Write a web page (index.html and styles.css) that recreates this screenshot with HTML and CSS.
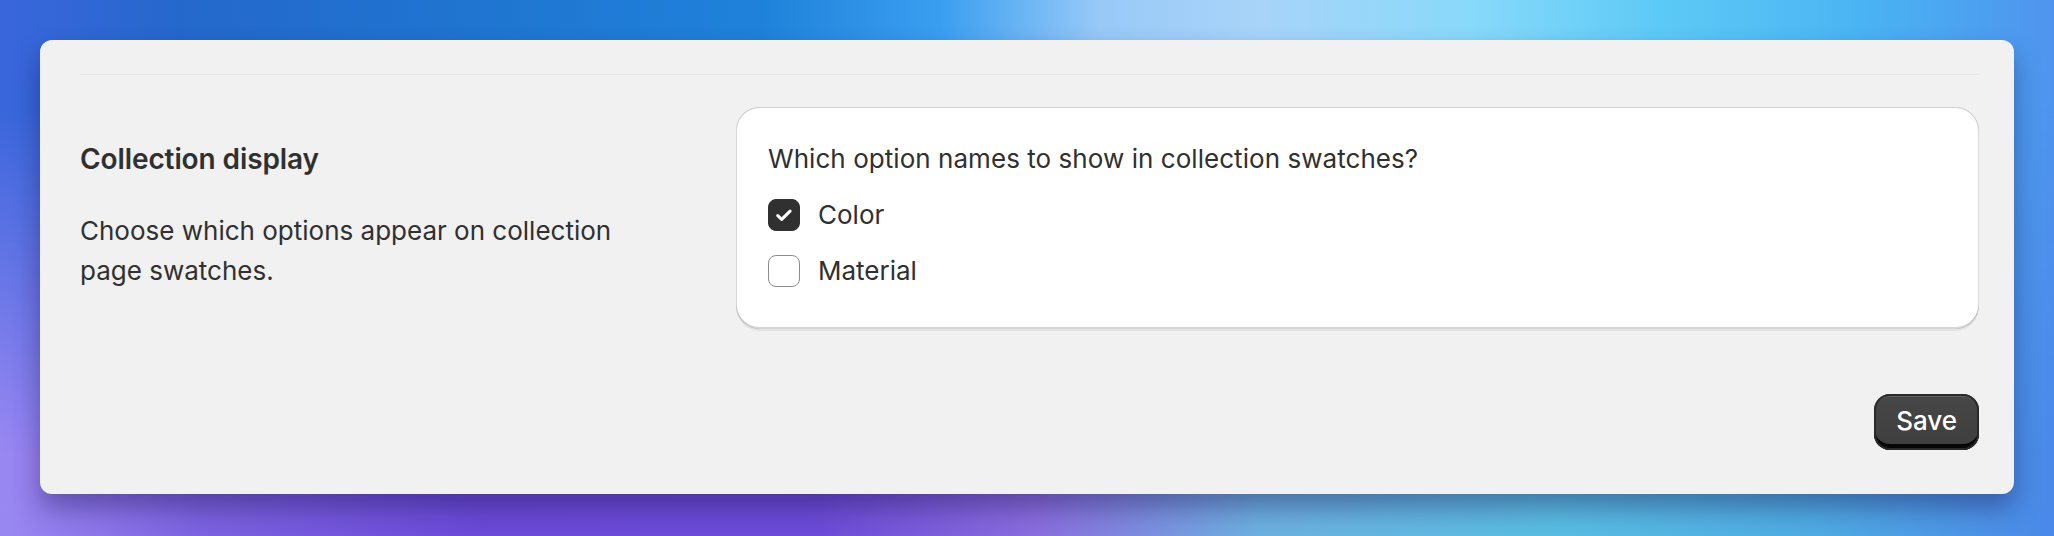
FILE: index.html
```html
<!DOCTYPE html>
<html lang="en">
<head>
<meta charset="utf-8">
<title>Collection display settings</title>
<link rel="stylesheet" href="styles.css">
</head>
<body>
<main class="backdrop">
  <section class="panel">
    <hr class="divider">
    <div class="section">
      <div class="intro">
        <h2 class="intro-title">Collection display</h2>
        <p class="intro-text">Choose which options appear on collection page swatches.</p>
      </div>
      <div class="card">
        <p class="question">Which option names to show in collection swatches?</p>
        <label class="choice">
          <span class="box box-checked">
            <svg viewBox="0 0 32 32" width="32" height="32" aria-hidden="true"><path d="M9.3 16.6l4.2 4 9-8.8" fill="none" stroke="#fff" stroke-width="3.3" stroke-linecap="round" stroke-linejoin="round"/></svg>
          </span>
          <span class="choice-label">Color</span>
        </label>
        <label class="choice">
          <span class="box"></span>
          <span class="choice-label">Material</span>
        </label>
      </div>
    </div>
    <div class="actions">
      <button class="btn-primary" type="button">Save</button>
    </div>
  </section>
</main>
</body>
</html>
```

FILE: styles.css
```css
* { box-sizing: border-box; }

html, body {
  margin: 0;
  height: 100%;
}

body {
  font-family: Inter, "Noto Sans", "Liberation Sans", sans-serif;
  color: #303030;
  overflow: hidden;
}

/* Colourful wallpaper behind the settings panel */
.backdrop {
  position: relative;
  min-height: 536px;
  padding: 40px;
  background: linear-gradient(to right,
    #3a66dc 0px,
    #2568cc 180px,
    #1f74d0 450px,
    #1f82da 760px,
    #3a9ef0 940px,
    #98c9f7 1100px,
    #a8d4f9 1260px,
    #88d9fa 1470px,
    #5ccaf6 1660px,
    #4ab4f3 1860px,
    #4e94ee 2054px);
}

.backdrop::before {
  content: "";
  position: absolute;
  inset: 0;
  background: linear-gradient(to right,
    #9a88f2 0px,
    #7c62e0 200px,
    #6a4ad8 480px,
    #6c4cd8 820px,
    #8a6ede 1040px,
    #6cb0e0 1260px,
    #58bde2 1560px,
    #4eaae2 1820px,
    #4a88e8 2054px);
  -webkit-mask-image: linear-gradient(to bottom, transparent 20%, #000 85%);
  mask-image: linear-gradient(to bottom, transparent 20%, #000 85%);
}

.panel {
  position: relative;
  background: #f1f1f1;
  border-radius: 12px;
  padding: 34px 35px 44px 40px;
  box-shadow: 0 14px 26px rgba(24, 12, 70, 0.38);
}

.divider {
  margin: 0;
  border: 0;
  height: 1px;
  background: #e6e6e6;
}

.section {
  display: grid;
  grid-template-columns: 616px 1fr;
  column-gap: 40px;
  margin-top: 32px;
}

.intro {
  padding-top: 32px;
  max-width: 560px;
}

.intro-title {
  margin: 0;
  font-size: 28px;
  line-height: 40px;
  font-weight: 600;
  letter-spacing: -0.1px;
}

.intro-text {
  margin: 32px 0 0;
  font-size: 26px;
  line-height: 40px;
  font-weight: 400;
}

.card {
  background: #fff;
  border-radius: 24px;
  padding: 32px 32px 38px;
  display: flex;
  flex-direction: column;
  gap: 16px;
  box-shadow:
    0 2px 0 rgba(26, 26, 26, 0.07),
    inset 0 1px 0 rgba(190, 190, 190, 0.7),
    inset 0 -2px 0 rgba(0, 0, 0, 0.16),
    inset -1px 0 0 rgba(0, 0, 0, 0.15),
    inset 1px 0 0 rgba(0, 0, 0, 0.15);
}

.question {
  margin: 0;
  font-size: 26px;
  line-height: 40px;
  font-weight: 400;
  letter-spacing: 0.05px;
}

.choice {
  display: flex;
  align-items: center;
  gap: 18px;
  height: 40px;
  font-size: 26px;
  line-height: 40px;
  font-weight: 400;
}

.box {
  flex: 0 0 32px;
  width: 32px;
  height: 32px;
  border-radius: 8px;
  background: #fff;
  border: 1.5px solid #8d8d8d;
  display: flex;
  align-items: center;
  justify-content: center;
}

.box svg { display: block; }

.box-checked {
  background: #303030;
  border-color: #303030;
}

.actions {
  display: flex;
  justify-content: flex-end;
  margin-top: 65px;
}

.btn-primary {
  height: 56px;
  padding: 0 22px 4px;
  border: 0;
  border-radius: 16px;
  font-family: inherit;
  font-size: 26px;
  font-weight: 500;
  color: #fff;
  background: linear-gradient(#474747, #3e3e3e);
  box-shadow:
    inset 0 0 0 2px #2a2a2a,
    inset 0 4px 0 -1px rgba(255, 255, 255, 0.14),
    inset 0 -6px 0 0 #060606;
}
```
